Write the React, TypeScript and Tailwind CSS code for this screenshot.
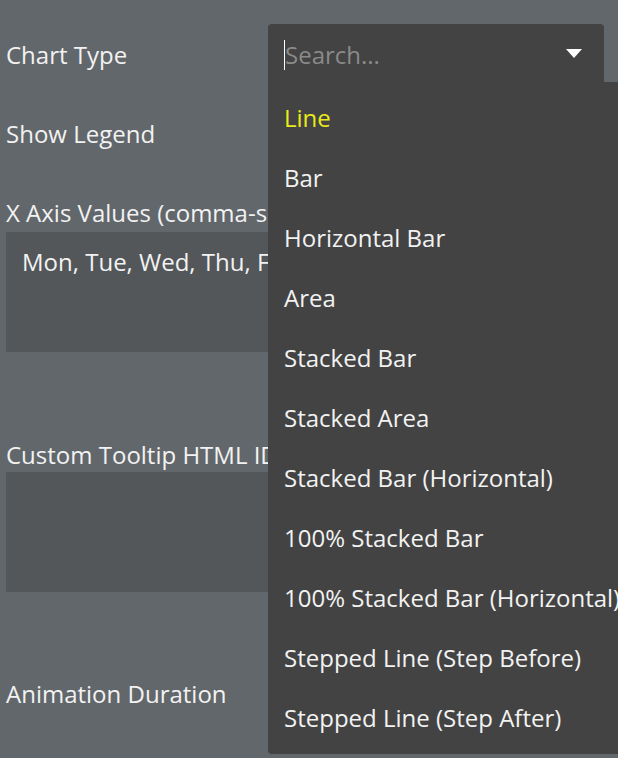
const chartTypes = [
  "Line",
  "Bar",
  "Horizontal Bar",
  "Area",
  "Stacked Bar",
  "Stacked Area",
  "Stacked Bar (Horizontal)",
  "100% Stacked Bar",
  "100% Stacked Bar (Horizontal)",
  "Stepped Line (Step Before)",
  "Stepped Line (Step After)",
];

function ChartTypeSelect() {
  const selected = "Line";

  return (
    <div className="relative w-[336px]">
      <div className="flex h-[58px] items-center rounded-t-[4px] bg-[#434343] pl-[16px] pr-[22px]">
        <span className="mt-[4px] h-[30px] w-px bg-white" />
        <span className="mt-[4px] flex-1 text-[#8a8a8a]">Search...</span>
        <svg width="16" height="9" viewBox="0 0 16 9" className="mt-[1px]">
          <path d="M0 0 L16 0 L8 9 Z" fill="#ffffff" />
        </svg>
      </div>
      <ul className="absolute left-0 top-[58px] z-10 w-[380px] rounded-b-[4px] bg-[#434343] py-[6px]">
        {chartTypes.map((type) => (
          <li
            key={type}
            className={`flex h-[60px] items-center whitespace-nowrap pl-[16px] ${
              type === selected ? "text-[#eaea1a]" : "text-[#f2f2f2]"
            }`}
          >
            {type}
          </li>
        ))}
      </ul>
    </div>
  );
}

export default function App() {
  return (
    <div
      className="h-[758px] w-[618px] overflow-hidden bg-[#62676b] pl-[6px] pr-[14px] pt-[24px] text-[24px] leading-[30px] text-[#f2f2f2]"
      style={{ fontFamily: '"Open Sans", "Noto Sans", sans-serif' }}
    >
      <div className="flex items-center">
        <span className="mt-[3px] flex-1">Chart Type</span>
        <ChartTypeSelect />
      </div>

      <div className="mt-[23px] flex h-[58px] items-center">Show Legend</div>

      <div className="mt-[35px]">X Axis Values (comma-separated)</div>
      <div className="mt-[4px] h-[120px] bg-[#53575a] px-[16px] py-[15px]">
        Mon, Tue, Wed, Thu, Fri, Sat, Sun
      </div>

      <div className="mt-[88px]">Custom Tooltip HTML ID</div>
      <div className="mt-[2px] h-[120px] bg-[#53575a]" />

      <div className="mt-[87px]">Animation Duration</div>
    </div>
  );
}
